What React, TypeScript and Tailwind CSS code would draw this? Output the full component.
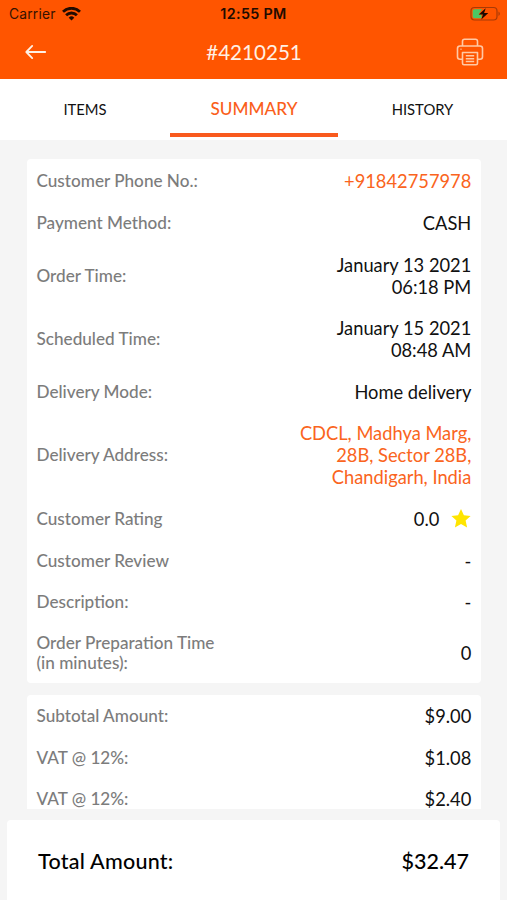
import type { ReactNode } from "react";

type RowProps = { label: ReactNode; children: ReactNode; accent?: boolean };

function Row({ label, children, accent }: RowProps) {
  return (
    <div className="flex items-center justify-between py-[9.8px]">
      <span className="text-[17.15px] leading-[20.2px] font-medium text-[#7c7c7c]">{label}</span>
      <span
        className={
          accent
            ? "text-right text-[18.3px] leading-[22px] text-[#fa6420]"
            : "text-right text-[18.3px] leading-[22px] text-[#111]"
        }
      >
        {children}
      </span>
    </div>
  );
}

function StatusBar() {
  return (
    <div className="grid h-[27px] grid-cols-[1fr_auto_1fr] items-center pr-[6px] pl-[9px] font-['Inter',sans-serif] text-[13.8px] text-[#351200]">
      <div className="flex items-center gap-[6px]">
        <span className="pt-px tracking-[0.2px]">Carrier</span>
        <svg width="19" height="14" viewBox="0 0 19 14" fill="none" stroke="#210b00" strokeWidth="2.8">
          <path d="M1 4.7a12.2 12.2 0 0 1 17 0" />
          <path d="M4.1 8.2a7.7 7.7 0 0 1 10.8 0" />
          <path d="M9.5 13.5 6.700 10.700a4 4 0 0 1 5.600 0z" fill="#210b00" stroke="none" />
        </svg>
      </div>
      <span className="pt-px pr-[3px] text-center text-[14.3px] font-semibold tracking-[0.35px] whitespace-nowrap text-[#210b00]">12:55 PM</span>
      <svg className="justify-self-end" width="31" height="16" viewBox="0 0 31 16" fill="none">
        <rect x="1" y="1.5" width="26" height="12.5" rx="3.5" stroke="#a83a06" strokeWidth="1.2" />
        <path d="M4.5 3.2h7.500L8.500 8.500h3v3.800h-7A1.800 1.800 0 0 1 2.700 10.500V5a1.800 1.800 0 0 1 1.800-1.800z" fill="#4cc764" />
        <path d="M15.700 2.200 8.800 8.600h4.100l-1.600 5 7-6.600h-4.200z" fill="#1a0800" />
        <path d="M28.500 5.500v4.500c1.800-.7 1.800-3.800 0-4.500z" fill="#a83a06" />
      </svg>
    </div>
  );
}

function Header() {
  return (
    <header className="h-[79px] bg-[#ff5500]">
      <StatusBar />
      <div className="grid h-[50px] grid-cols-[1fr_auto_1fr] items-center pr-[23px] pl-[25px]">
        <svg width="22" height="16" viewBox="0 0 22 16" fill="none" stroke="#fff0e4" strokeWidth="1.8" strokeLinecap="round" strokeLinejoin="round">
          <path d="M20.200 8H1.500M7.200 1.900 1.300 8l5.900 6.100" />
        </svg>
        <h1 className="pr-px text-[20.6px] leading-6 text-[#fff0e4]">#4210251</h1>
        <svg className="justify-self-end" width="28" height="28" viewBox="0 0 28 28" fill="none" stroke="#ffc9a5" strokeWidth="1.6" strokeLinejoin="round">
          <path d="M6.500 8V3.200a2 2 0 0 1 2-1.900h11a2 2 0 0 1 2 1.900V8" />
          <path d="M6.500 21.200H4a2.500 2.500 0 0 1-2.500-2.500V10.500A2.500 2.500 0 0 1 4 8h20a2.500 2.500 0 0 1 2.500 2.500v8.200A2.500 2.500 0 0 1 24 21.200h-2.500" />
          <path d="M6.500 14.500h15v10.700a1.500 1.500 0 0 1-1.500 1.500H8a1.500 1.500 0 0 1-1.500-1.500z" />
          <path d="M9.800 17.800h8.400M9.800 20.700h8.400M9.800 23.500h8.400M4.500 11.300h1" />
        </svg>
      </div>
    </header>
  );
}

function Tabs() {
  return (
    <nav className="grid h-[61px] grid-cols-3 bg-white text-center">
      <div className="pt-[20px] pl-px text-[14.8px] leading-5 text-[#111]">ITEMS</div>
      <div className="mb-[3.5px] ml-px border-b-4 border-[#f95a1e] pt-[20px] text-[17.2px] leading-5 font-medium text-[#fa5f1c]">SUMMARY</div>
      <div className="pt-[20px] text-[14.8px] leading-5 text-[#111]">HISTORY</div>
    </nav>
  );
}

export default function App() {
  return (
    <div className="flex h-[900px] w-[507px] flex-col overflow-hidden bg-[#f5f5f5] font-['Lato',sans-serif]">
      <Header />
      <Tabs />
      <main className="flex h-[669px] flex-col gap-[12.3px] overflow-hidden pr-[25.7px] pl-[26.5px] pt-[18.5px]">
        <section className="shrink-0 rounded-[4px] bg-white px-[10px] pt-[2.2px]">
          <Row label="Customer Phone No.:" accent>+91842757978</Row>
          <Row label="Payment Method:">CASH</Row>
          <Row label="Order Time:">January 13 2021<br />06:18 PM</Row>
          <Row label="Scheduled Time:">January 15 2021<br />08:48 AM</Row>
          <Row label="Delivery Mode:">Home delivery</Row>
          <Row label="Delivery Address:" accent>CDCL, Madhya Marg,<br />28B, Sector 28B,<br />Chandigarh, India</Row>
          <Row label="Customer Rating">
            <span className="flex items-center gap-[12px]">
              0.0
              <svg width="20" height="20" viewBox="0 0 20 20" fill="#ffe500">
                <path d="m10 0 2.900 6.200 6.700.8-5 4.600 1.500 6.900L10 15l-6.100 3.500 1.500-6.900L.4 7l6.700-.8z" />
              </svg>
            </span>
          </Row>
          <Row label="Customer Review">-</Row>
          <Row label="Description:">-</Row>
          <Row label={<>Order Preparation Time<br />(in minutes):</>}>0</Row>
        </section>
        <section className="shrink-0 rounded-[4px] bg-white px-[10px]">
          <Row label="Subtotal Amount:">$9.00</Row>
          <Row label="VAT @ 12%:">$1.08</Row>
          <Row label="VAT @ 12%:">$2.40</Row>
        </section>
      </main>
      <footer className="mx-[7px] mt-[11px] flex h-[80px] items-center justify-between rounded-t-[4px] bg-white px-[31px] pt-[2px] text-[21.5px] font-medium text-black">
        <span className="tracking-[0.25px]">Total Amount:</span>
        <span>$32.47</span>
      </footer>
    </div>
  );
}
